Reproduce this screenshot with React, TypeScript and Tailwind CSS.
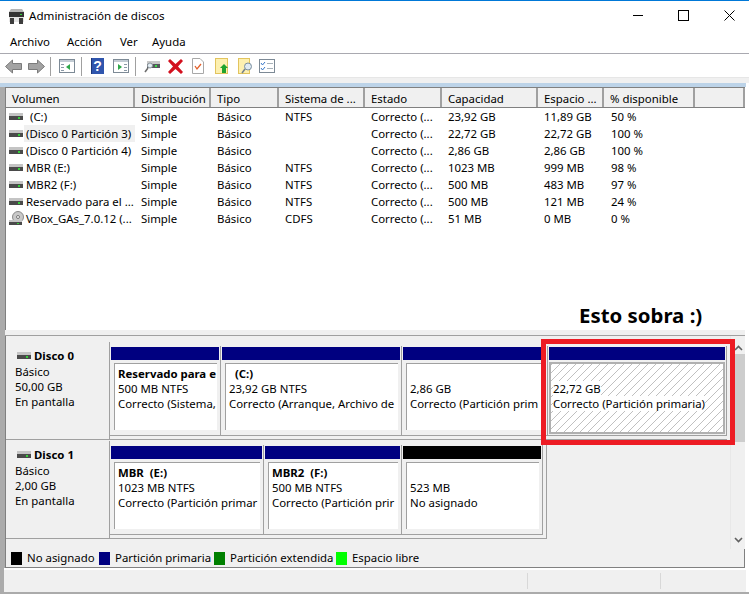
import type { ReactNode } from 'react';

type VolumeRow = {
  name: string;
  fs: string;
  capacity: string;
  free: string;
  percent: string;
};

const rows: VolumeRow[] = [
  { name: '(C:)', fs: 'NTFS', capacity: '23,92 GB', free: '11,89 GB', percent: '50 %' },
  { name: '(Disco 0 Partición 3)', fs: '', capacity: '22,72 GB', free: '22,72 GB', percent: '100 %' },
  { name: '(Disco 0 Partición 4)', fs: '', capacity: '2,86 GB', free: '2,86 GB', percent: '100 %' },
  { name: 'MBR (E:)', fs: 'NTFS', capacity: '1023 MB', free: '999 MB', percent: '98 %' },
  { name: 'MBR2 (F:)', fs: 'NTFS', capacity: '500 MB', free: '483 MB', percent: '97 %' },
  { name: 'Reservado para el ...', fs: 'NTFS', capacity: '500 MB', free: '121 MB', percent: '24 %' },
  { name: 'VBox_GAs_7.0.12 (...', fs: 'CDFS', capacity: '51 MB', free: '0 MB', percent: '0 %' },
];

const headers = ['Volumen', 'Distribución', 'Tipo', 'Sistema de ...', 'Estado', 'Capacidad', 'Espacio ...', '% disponible', ''];
const gridCols = 'grid grid-cols-[129px_76px_68px_86px_77px_96px_66px_91px_50px]';

function DiskIcon() {
  return (
    <svg width="15" height="8" viewBox="0 0 15 8" className="shrink-0">
      <rect x="0" y="0" width="14" height="3" fill="#c4c4c4" />
      <rect x="0" y="3" width="14" height="4" fill="#4a4a4a" />
      <rect x="9" y="4" width="2" height="2" fill="#35d03a" />
    </svg>
  );
}

function CdIcon() {
  return (
    <svg width="15" height="15" viewBox="0 0 15 15" className="shrink-0">
      <circle cx="9" cy="6" r="5.5" fill="#c9c9c9" stroke="#8a8a8a" />
      <circle cx="9" cy="6" r="1.5" fill="#fff" stroke="#777" />
      <rect x="0" y="9" width="13" height="2" fill="#c4c4c4" />
      <rect x="0" y="11" width="13" height="3" fill="#4a4a4a" />
      <rect x="8" y="12" width="2" height="1" fill="#35d03a" />
    </svg>
  );
}

function TitleIcon() {
  return (
    <svg width="17" height="15" viewBox="0 0 17 15" className="shrink-0 mt-px">
      <polygon points="3,0 14,0 16,3 1,3" fill="#b5b5b5" />
      <rect x="1" y="3" width="15" height="5" fill="#333333" />
      <rect x="12" y="5" width="2" height="1" fill="#35d03a" />
      <rect x="1" y="8" width="15" height="5" fill="#e4e4e4" />
      <rect x="2" y="9" width="4" height="6" fill="#3d3d3d" />
      <rect x="11" y="9" width="4" height="6" fill="#3d3d3d" />
    </svg>
  );
}

function Arrow({ flip }: { flip?: boolean }) {
  return (
    <svg width="17" height="15" viewBox="0 0 17 15" className={flip ? '-scale-x-100' : ''}>
      <polygon points="0.5,7.5 7.5,1 7.5,4.5 16.5,4.5 16.5,10.5 7.5,10.5 7.5,14" fill="#a3a3a3" stroke="#7b7b7b" />
    </svg>
  );
}

function PaneIcon({ arrowLeft }: { arrowLeft?: boolean }) {
  return (
    <svg width="16" height="14" viewBox="0 0 16 14">
      <rect x="0.5" y="0.5" width="15" height="13" fill="#fff" stroke="#7d8a96" />
      <rect x="1" y="1" width="14" height="2" fill="#c3ccd4" />
      {arrowLeft ? (
        <>
          <rect x="2" y="5" width="3" height="1" fill="#8b99a6" />
          <rect x="2" y="8" width="3" height="1" fill="#8b99a6" />
          <rect x="2" y="11" width="3" height="1" fill="#8b99a6" />
          <polygon points="7,8 11,5 11,11" fill="#2fa84a" />
        </>
      ) : (
        <>
          <rect x="11" y="5" width="3" height="1" fill="#8b99a6" />
          <rect x="11" y="8" width="3" height="1" fill="#8b99a6" />
          <rect x="11" y="11" width="3" height="1" fill="#8b99a6" />
          <polygon points="9,8 5,5 5,11" fill="#2fa84a" />
        </>
      )}
    </svg>
  );
}

function HelpIcon() {
  return (
    <svg width="13" height="16" viewBox="0 0 13 16">
      <rect x="0" y="0" width="13" height="16" fill="#2f55ad" />
      <rect x="0" y="0" width="1" height="16" fill="#1c3677" />
      <text x="6.5" y="13" textAnchor="middle" fontSize="14" fontWeight="700" fontFamily="Liberation Sans, sans-serif" fill="#fff">?</text>
    </svg>
  );
}

function ConnectIcon() {
  return (
    <svg width="16" height="15" viewBox="0 0 16 15">
      <rect x="3" y="2" width="13" height="3" fill="#c8c8c8" />
      <rect x="3" y="5" width="13" height="4" fill="#55585c" />
      <rect x="11" y="6" width="2" height="2" fill="#3be04a" />
      <circle cx="6" cy="6.5" r="2.5" fill="#e4eef4" stroke="#8a949c" />
      <line x1="4" y1="9" x2="1" y2="13" stroke="#6d6d6d" strokeWidth="1.5" />
    </svg>
  );
}

function DeleteIcon() {
  return (
    <svg width="15" height="15" viewBox="0 0 15 15">
      <polygon points="0,2 2,0 7.5,5 13,0 15,2 10,7.5 15,13 13,15 7.5,10 2,15 0,13 5,7.5" fill="#d3101e" />
    </svg>
  );
}

function CheckDocIcon() {
  return (
    <svg width="12" height="16" viewBox="0 0 12 16">
      <polygon points="0.5,0.5 8,0.5 11.5,4 11.5,15.5 0.5,15.5" fill="#fff" stroke="#a8a8a8" />
      <polyline points="3,8 5,11 9,6" fill="none" stroke="#e2602a" strokeWidth="1.3" />
    </svg>
  );
}

function FolderUpIcon() {
  return (
    <svg width="13" height="16" viewBox="0 0 13 16">
      <rect x="0.5" y="0.5" width="12" height="15" fill="#fdf0b0" stroke="#e2c45e" />
      <polygon points="9,6 13,10 11,10 11,15 7,15 7,10 5,10" fill="#1fa32e" />
    </svg>
  );
}

function FolderFindIcon() {
  return (
    <svg width="15" height="16" viewBox="0 0 15 16">
      <rect x="0.5" y="0.5" width="11" height="15" fill="#fdf0b0" stroke="#e2c45e" />
      <circle cx="10" cy="8.5" r="3.5" fill="#dfeaf2" stroke="#7b8f9f" />
      <line x1="7" y1="11" x2="4" y2="15" stroke="#76828c" strokeWidth="1.5" />
    </svg>
  );
}

function TaskListIcon() {
  return (
    <svg width="16" height="14" viewBox="0 0 16 14">
      <rect x="0.5" y="0.5" width="15" height="13" fill="#fff" stroke="#7d8a96" />
      <polyline points="2,4 3.5,6 6,3" fill="none" stroke="#3a78c8" strokeWidth="1" />
      <polyline points="2,9 3.5,11 6,8" fill="none" stroke="#3a78c8" strokeWidth="1" />
      <rect x="8" y="4" width="6" height="1" fill="#a8b2ba" />
      <rect x="8" y="9" width="6" height="1" fill="#a8b2ba" />
    </svg>
  );
}

function Separator() {
  return <div className="h-[19px] w-px bg-[#a0a0a0]" />;
}

type PartitionProps = {
  width: string;
  name?: ReactNode;
  line1: string;
  line2: string;
  black?: boolean;
  last?: boolean;
};

function Partition({ width, name, line1, line2, black, last }: PartitionProps) {
  return (
    <div className={`${width} shrink-0 pl-px flex flex-col border-[#a0a0a0] ${last ? '' : 'border-r'}`}>
      <div className={`h-[13px] mt-px mr-px ${black ? 'bg-black' : 'bg-[#000080]'}`} />
      <div className="mt-[3px] ml-[3px] mr-[3px] h-[67px] bg-white border-t border-l border-[#a0a0a0] pl-[3px] pt-[2px] overflow-hidden whitespace-pre leading-[15px]">
        <div className="h-[15px] font-bold">{name}</div>
        <div className="h-[15px]">{line1}</div>
        <div className="h-[15px]">{line2}</div>
      </div>
    </div>
  );
}

function DiskLabel({ title, size }: { title: string; size: string }) {
  return (
    <div className="w-[104px] h-[98px] mt-px shrink-0 bg-[#f0f0f0] border-r border-b border-[#a0a0a0] pl-[9px] pt-[6px] leading-[15px]">
      <div className="flex items-center gap-[2px] h-[15px] ml-[2px]">
        <DiskIcon />
        <span className="font-bold">{title}</span>
      </div>
      <div className="mt-px">Básico</div>
      <div>{size}</div>
      <div>En pantalla</div>
    </div>
  );
}

function Legend({ color, label, width }: { color: string; label: string; width: string }) {
  return (
    <div className={`flex items-center gap-[5px] ${width}`}>
      <div className={`w-[11px] h-[13px] ${color}`} />
      <span className="pb-px">{label}</span>
    </div>
  );
}

export default function App() {
  return (
    <div className="relative w-[749px] h-[594px] overflow-hidden bg-white text-black text-[11.4px] font-['Noto_Sans',sans-serif] flex flex-col">
      <div className="h-px bg-[#0078d7]" />

      {/* Title bar */}
      <div className="h-[29px] flex items-center pl-2">
        <TitleIcon />
        <span className="ml-[4px] pt-px text-[11.6px]">Administración de discos</span>
        <div className="ml-auto flex items-center">
          <svg width="11" height="11" viewBox="0 0 11 11">
            <line x1="0" y1="5.5" x2="10" y2="5.5" stroke="#000" />
          </svg>
          <svg width="11" height="11" viewBox="0 0 11 11" className="ml-[34px]">
            <rect x="0.5" y="0.5" width="10" height="10" fill="none" stroke="#000" />
          </svg>
          <svg width="11" height="11" viewBox="0 0 11 11" className="ml-[35px] mr-[14px]">
            <path d="M0.5 0.5 L10.5 10.5 M10.5 0.5 L0.5 10.5" stroke="#000" fill="none" />
          </svg>
        </div>
      </div>

      {/* Menu */}
      <div className="h-[24px] flex items-center pl-[10px] pt-px border-b border-[#a9a9b0]">
        <span className="w-[57px]">Archivo</span>
        <span className="w-[53px]">Acción</span>
        <span className="w-[32px]">Ver</span>
        <span>Ayuda</span>
      </div>

      {/* Toolbar */}
      <div className="h-[23px] flex items-center pl-[5px] pt-px">
        <Arrow />
        <div className="ml-[6px]"><Arrow flip /></div>
        <div className="ml-[5px]"><Separator /></div>
        <div className="ml-[8px]"><PaneIcon arrowLeft /></div>
        <div className="ml-[6px]"><Separator /></div>
        <div className="ml-[9px]"><HelpIcon /></div>
        <div className="ml-[9px]"><PaneIcon /></div>
        <div className="ml-[6px]"><Separator /></div>
        <div className="ml-[8px]"><ConnectIcon /></div>
        <div className="ml-[8px]"><DeleteIcon /></div>
        <div className="ml-[9px]"><CheckDocIcon /></div>
        <div className="ml-[11px]"><FolderUpIcon /></div>
        <div className="ml-[10px]"><FolderFindIcon /></div>
        <div className="ml-[6px]"><TaskListIcon /></div>
      </div>
      <div className="h-[6px] bg-[#f0f0f0] border-t border-[#e6e6e6]" />
      <div className="h-[4px] bg-[#bcd3e8] mr-[3px]" />

      {/* Main area */}
      <div className="flex-1 min-h-0 border-l-[5px] border-[#ababab] pr-[4px] flex flex-col">
        {/* Volume list */}
        <div className="h-[243px] shrink-0 bg-white border-l border-t border-[#808080] overflow-hidden">
          <div className={`${gridCols} h-[20px] bg-[#f0f0f0] border-b border-[#808080]`}>
            {headers.map((h, i) => (
              <div key={i} className="pl-[6px] border-r-2 border-[#a0a0a0] whitespace-nowrap overflow-hidden leading-[22px]">
                {h}
              </div>
            ))}
          </div>
          {rows.map((row, i) => (
            <div key={row.name} className={`${gridCols} h-[17px] leading-[17px] whitespace-nowrap`}>
              <div className="flex items-center pl-[3px]">
                <div className="w-[15px] flex justify-center">{i === 6 ? <CdIcon /> : <DiskIcon />}</div>
                <span className={`h-[17px] pl-[2px] ${i === 0 ? 'ml-[4px]' : ''} ${i === 1 ? 'bg-[#f0f0f0] w-[111px]' : ''}`}>{row.name}</span>
              </div>
              <div className="pl-[6px]">Simple</div>
              <div className="pl-[6px]">Básico</div>
              <div className="pl-[6px]">{row.fs}</div>
              <div className="pl-[6px]">Correcto (...</div>
              <div className="pl-[6px]">{row.capacity}</div>
              <div className="pl-[6px]">{row.free}</div>
              <div className="pl-[7px]">{row.percent}</div>
              <div />
            </div>
          ))}
        </div>

        {/* Splitter */}
        <div className="h-[6px] shrink-0 bg-[#f0f0f0] border-b border-[#a0a0a0]" />

        {/* Disks */}
        <div className="h-[213px] shrink-0 bg-[#f0f0f0] border-l border-[#808080] flex">
          <div className="w-[724px] shrink-0 pt-[5px]">
            <div className="flex h-[99px]">
              <DiskLabel title="Disco 0" size="50,00 GB" />
              <div className="flex pb-[3px] h-[99px] border-b border-[#a0a0a0]">
                <div className="flex border-b border-[#a0a0a0] pt-[5px]">
                  <Partition width="w-[111px]" name="Reservado para e" line1="500 MB NTFS" line2="Correcto (Sistema," />
                  <Partition width="w-[181px]" name="  (C:)" line1="23,92 GB NTFS" line2="Correcto (Arranque, Archivo de" />
                  <Partition width="w-[146px]" line1="2,86 GB" line2="Correcto (Partición prim" />
                  <div className="w-[179px] shrink-0 pl-px flex flex-col border-r border-[#a0a0a0]">
                    <div className="h-[13px] mt-px mr-px bg-[#000080]" />
                    <div className="mt-[2px] mr-px h-[72px] border-2 border-[#b0b0b0] pl-[2px] pt-[17px] leading-[15px] whitespace-nowrap bg-[repeating-linear-gradient(135deg,#c0c0c0_0,#c0c0c0_1px,#ffffff_1px,#ffffff_5.66px)]">
                      <div><span className="bg-white">22,72 GB</span></div>
                      <div><span className="bg-white">Correcto (Partición primaria)</span></div>
                    </div>
                  </div>
                </div>
              </div>
            </div>
            <div className="flex h-[99px]">
              <DiskLabel title="Disco 1" size="2,00 GB" />
              <div className="flex w-[437px] pr-[3px] pb-[3px] h-[99px] border-r border-b border-[#a0a0a0]">
                <div className="flex border-r border-b border-[#a0a0a0] pt-[5px]">
                  <Partition width="w-[154px]" name="MBR  (E:)" line1="1023 MB NTFS" line2="Correcto (Partición primar" />
                  <Partition width="w-[138px]" name="MBR2  (F:)" line1="500 MB NTFS" line2="Correcto (Partición prir" />
                  <Partition width="w-[140px]" black last line1="523 MB" line2="No asignado" />
                </div>
              </div>
            </div>
          </div>

          {/* Scrollbar */}
          <div className="w-[15px] shrink-0 flex flex-col border-l border-[#e8e8e8]">
            <div className="h-[13px] mt-[5px] flex items-center justify-center">
              <svg width="9" height="6" viewBox="0 0 9 6"><polyline points="1,5 4.5,1.5 8,5" fill="none" stroke="#606060" strokeWidth="1.6" /></svg>
            </div>
            <div className="h-[88px] bg-[#cdcdcd]" />
            <div className="mt-auto h-[13px] mb-[3px] flex items-center justify-center">
              <svg width="9" height="6" viewBox="0 0 9 6"><polyline points="1,1 4.5,4.5 8,1" fill="none" stroke="#606060" strokeWidth="1.6" /></svg>
            </div>
          </div>
        </div>

        {/* Legend */}
        <div className="h-[19px] shrink-0 bg-[#f0f0f0] border-l border-r border-b border-[#808080] flex items-center pl-[5px]">
          <Legend color="bg-black" label="No asignado" width="w-[88px]" />
          <Legend color="bg-[#000080]" label="Partición primaria" width="w-[115px]" />
          <Legend color="bg-[#008000]" label="Partición extendida" width="w-[122px]" />
          <Legend color="bg-[#00ff00]" label="Espacio libre" width="w-[100px]" />
        </div>
      </div>

      {/* Status bar */}
      <div className="h-[26px] shrink-0 border-l-[4px] border-b-[2px] border-[#ababab] bg-white pr-[3px] pt-[2px]">
        <div className="h-full bg-[#f0f0f0] flex">
          <div className="w-[524px] my-[3px] border-r border-[#d8d8d8]" />
          <div className="w-[133px] my-[3px] border-r border-[#d8d8d8]" />
        </div>
      </div>

      {/* Annotation drawn over the screenshot */}
      <div className="absolute left-[579px] top-[301px] text-[20.4px] leading-[28px] font-bold whitespace-nowrap">Esto sobra :)</div>
      <div className="absolute left-[541px] top-[339px] w-[194px] h-[106px] border-[5px] border-[#ed1c24]" />
    </div>
  );
}
